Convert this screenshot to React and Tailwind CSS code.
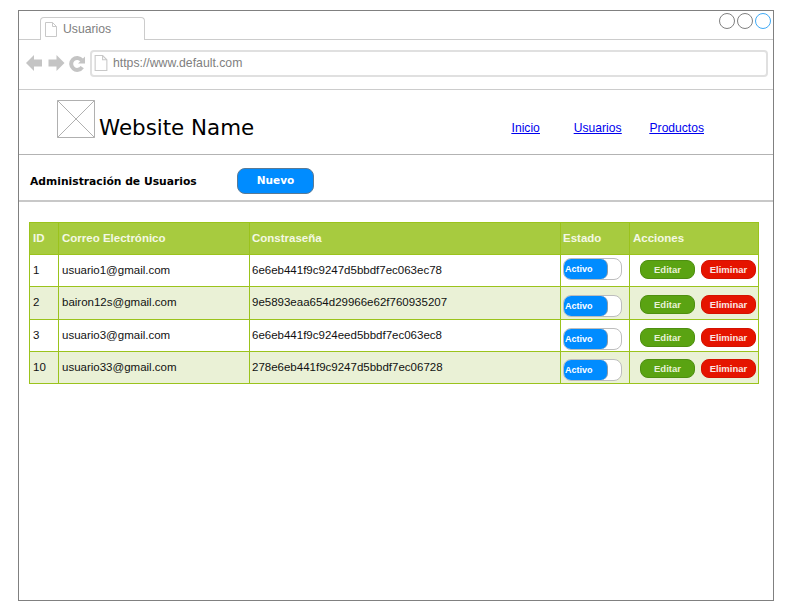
import React from 'react';

const rows = [
    { id: '1', mail: 'usuario1@gmail.com', pass: '6e6eb441f9c9247d5bbdf7ec063ec78', h: 'h-[32px]', sw: 'items-start pt-[3px]', btn: 'pt-[5px]' },
    { id: '2', mail: 'bairon12s@gmail.com', pass: '9e5893eaa654d29966e62f760935207', h: 'h-[33px]', sw: 'items-start pt-[8px]', btn: 'pt-[8px]' },
    { id: '3', mail: 'usuario3@gmail.com', pass: '6e6eb441f9c924eed5bbdf7ec063ec8', h: 'h-[32px]', sw: 'items-start pt-[8px]', btn: 'pt-[8px]' },
    { id: '10', mail: 'usuario33@gmail.com', pass: '278e6eb441f9c9247d5bbdf7ec06728', h: 'h-[31px]', sw: 'items-start pt-[7px]', btn: 'pt-[7px]' },
];

const PageIcon = ({ className }) => (
    <svg className={className} viewBox="0 0 12 15" fill="none" stroke="#c8c8c8" strokeWidth="1">
        <path d="M.5 .5h7l4 4v10h-11z" fill="#fff" />
        <path d="M7.500 .5v4h4" />
    </svg>
);

const NavIcons = () => (
    <svg className="w-[59px] h-[18px] shrink-0" viewBox="0 0 59 18">
        <path d="M0 9l8-8v4.500h8v7h-8v4.500z" fill="#c4c4c4" />
        <path d="M38.500 9l-8-8v4.500h-8v7h8v4.500z" fill="#c4c4c4" />
        <path d="M56.200 13.200a6 6 0 1 1-.3-7" fill="none" stroke="#c4c4c4" strokeWidth="4" />
        <path d="M59 2.500v7h-7z" fill="#c4c4c4" />
    </svg>
);

const Toggle = () => (
    <div className="w-[59px] h-[22px] rounded-[8px] border border-[#bdbdbd] bg-white shrink-0">
        <div className="w-[44px] h-[20px] rounded-[7px] bg-[#008cff] border-r border-[#8a9aa8] text-white font-bold text-[9px] leading-[20px] pl-[1px] font-['Liberation_Sans',sans-serif]">Activo</div>
    </div>
);

const App = () => {
    return (
        <div className="w-[792px] h-[614px] bg-white pl-[18px] pt-[10px] font-['Liberation_Sans',sans-serif]">
            <div className="relative w-[756px] h-[591px] border border-[#808080] bg-white">
                <div className="h-[29px] border-b border-[#cccccc] pl-[21px] pt-[6px]">
                    <div className="w-[105px] h-[23px] border border-b-0 border-[#cccccc] rounded-t-[4px] bg-white flex items-center pl-[4px] gap-[6px]">
                        <PageIcon className="w-[12px] h-[15px]" />
                        <span className="text-[12.200px] text-[#808080]">Usuarios</span>
                    </div>
                </div>
                <div className="absolute top-[2px] right-[2px] flex gap-[2px]">
                    <div className="w-[16px] h-[16px] rounded-full border border-[#808080]" />
                    <div className="w-[16px] h-[16px] rounded-full border border-[#808080]" />
                    <div className="w-[16px] h-[16px] rounded-full border border-[#3fa9f5]" />
                </div>
                <div className="h-[50px] border-b border-[#cccccc] flex items-center pl-[7px] pr-[5px] pb-[3px] gap-[5px]">
                    <NavIcons />
                    <div className="flex-1 h-[27px] border-2 border-[#e0e0e0] rounded-[4px] flex items-center pl-[2px] gap-[5px]">
                        <PageIcon className="w-[14px] h-[16px]" />
                        <span className="text-[12.250px] text-[#808080]">https://www.default.com</span>
                    </div>
                </div>
                <div className="h-[65px] border-b border-[#b3b3b3] flex pl-[38px]">
                    <svg className="w-[38px] h-[38px] mt-[10px] shrink-0" viewBox="0 0 38 38" fill="none" stroke="#b0b0b0" strokeWidth="1">
                        <path d="M.5 .5h37v37h-37zM.5 .5l37 37M37.500 .5l-37 37" />
                    </svg>
                    <h1 className="ml-[4px] mt-[22px] text-[21.400px] leading-[32px] text-black font-['DejaVu_Sans',sans-serif]">Website Name</h1>
                    <nav className="ml-auto mr-[69px] flex pt-[30px] text-[12.100px] leading-[17px] text-[#0000ee] underline">
                        <a className="mr-[34px]">Inicio</a>
                        <a className="mr-[28px]">Usuarios</a>
                        <a>Productos</a>
                    </nav>
                </div>
                <div className="h-[47px] border-b-2 border-[#c8c8c8] flex items-start pl-[11px] pt-[13px]">
                    <h2 className="w-[207px] mt-[5px] text-[10.750px] leading-[17px] font-bold text-black font-['DejaVu_Sans',sans-serif]">Administración de Usuarios</h2>
                    <button className="w-[77px] h-[26px] rounded-[8px] bg-[#008cff] border border-[#5a7a95] text-white font-bold text-[10.500px] font-['DejaVu_Sans',sans-serif]">Nuevo</button>
                </div>
                <div className="pl-[10px] pt-[20px]">
                    <div className="w-[730px] border-b border-[#9bc31c]">
                        <div className="flex h-[33px] bg-[#a7cb3f] border border-[#9bc31c] text-[11.500px] font-bold text-[#f4f8e4] leading-[31px]">
                            <div className="w-[29px] border-r border-[#9bc31c] pl-[3px]">ID</div>
                            <div className="w-[191px] border-r border-[#9bc31c] pl-[3px]">Correo Electrónico</div>
                            <div className="w-[311px] border-r border-[#9bc31c] pl-[2px]">Constraseña</div>
                            <div className="w-[69px] border-r border-[#9bc31c] pl-[2px]">Estado</div>
                            <div className="flex-1 pl-[3px]">Acciones</div>
                        </div>
                        {rows.map((r, i) => (
                            <div key={r.id} className={`flex ${r.h} border-l border-r border-[#9bc31c] ${i < 3 ? 'border-b' : ''} text-[11.500px] text-[#111111] leading-[30px] ${i % 2 ? 'bg-[#eaf1d6]' : 'bg-white'}`}>
                                <div className="w-[29px] border-r border-[#9bc31c] pl-[3px]">{r.id}</div>
                                <div className="w-[191px] border-r border-[#9bc31c] pl-[3px]">{r.mail}</div>
                                <div className="w-[311px] border-r border-[#9bc31c] pl-[2px]">{r.pass}</div>
                                <div className={`w-[69px] border-r border-[#9bc31c] pl-[2px] flex ${r.sw}`}><Toggle /></div>
                                <div className={`flex-1 pl-[10px] flex items-start gap-[6px] ${r.btn}`}>
                                    <button className="w-[55px] h-[19px] rounded-[8px] bg-[#5aa312] border border-[#4e8f10] text-[#e8f2d8] font-bold text-[9.500px] leading-none pt-[1px]">Editar</button>
                                    <button className="w-[55px] h-[19px] rounded-[8px] bg-[#e51400] border border-[#d41200] text-[#fbe6e3] font-bold text-[9.500px] leading-none pt-[1px]">Eliminar</button>
                                </div>
                            </div>
                        ))}
                    </div>
                </div>
            </div>
        </div>
    );
};

export default App;
